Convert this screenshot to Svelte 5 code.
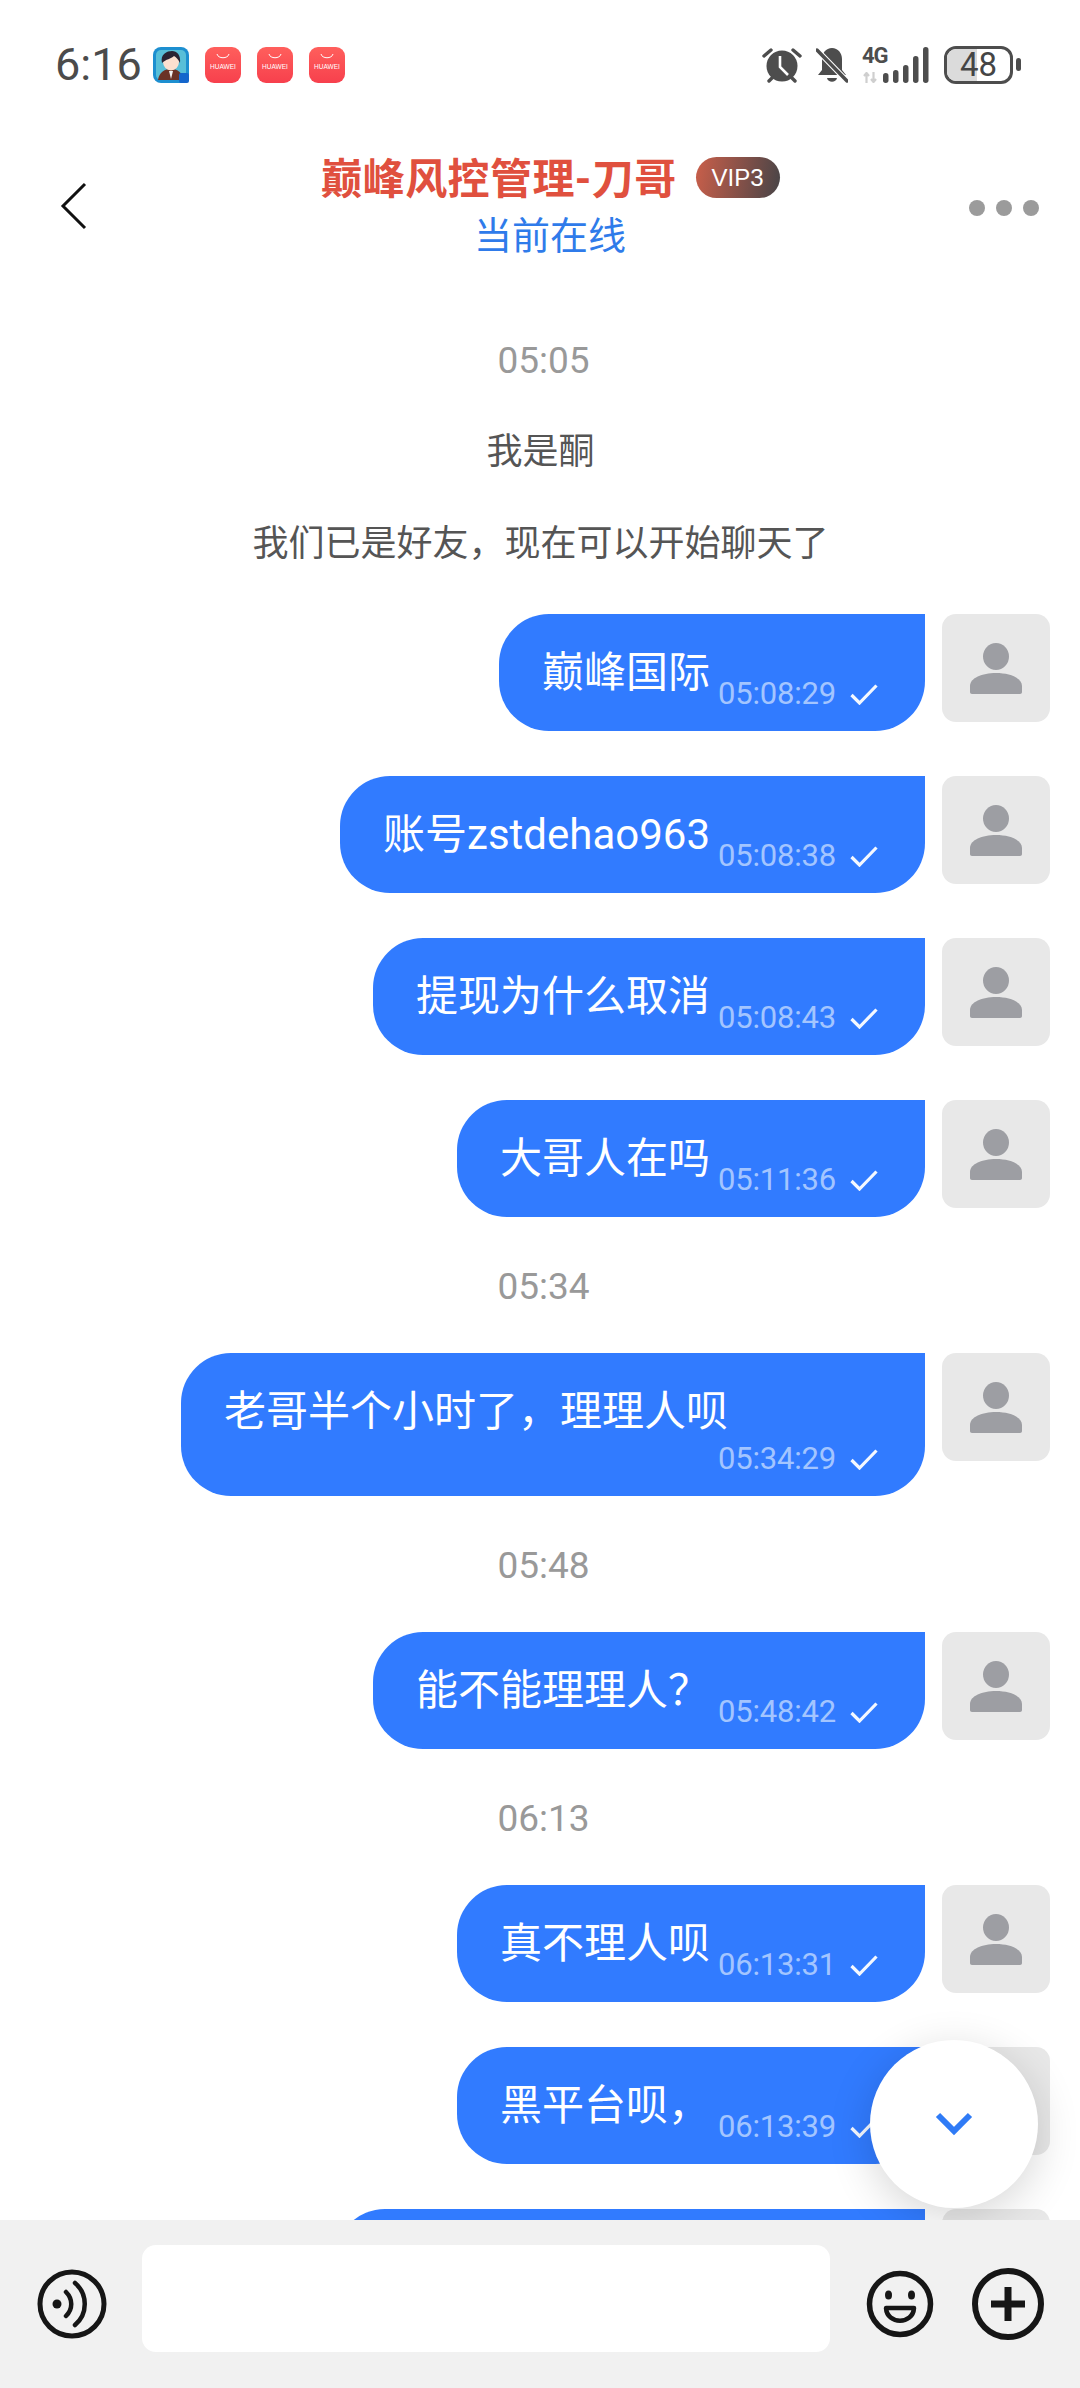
<script>
  const huaweiIcons = [0, 1, 2];
  const items = [
    { kind: 'time', text: '05:05' },
    { kind: 'sys', text: '我是酮' },
    { kind: 'sys', text: '我们已是好友，现在可以开始聊天了' },
    { kind: 'msg', text: '巅峰国际', at: '05:08:29' },
    { kind: 'msg', text: '账号zstdehao963', at: '05:08:38' },
    { kind: 'msg', text: '提现为什么取消', at: '05:08:43' },
    { kind: 'msg', text: '大哥人在吗', at: '05:11:36' },
    { kind: 'time', text: '05:34' },
    { kind: 'msg', text: '老哥半个小时了，理理人呗', at: '05:34:29' },
    { kind: 'time', text: '05:48' },
    { kind: 'msg', text: '能不能理理人？', at: '05:48:42' },
    { kind: 'time', text: '06:13' },
    { kind: 'msg', text: '真不理人呗', at: '06:13:31' },
    { kind: 'msg', text: '黑平台呗，', at: '06:13:39' },
    { kind: 'blank' }
  ];
</script>

{#snippet avatar()}
  <div class="avatar">
    <svg viewBox="0 0 52 51">
      <ellipse cx="26" cy="13.500" rx="13" ry="13.500" fill="#9d9ea3" />
      <path d="M0 49v-6C0 35 12 30 26 30s26 5 26 13v6c0 1.200-.8 2-2 2H2c-1.200 0-2-.8-2-2z" fill="#9d9ea3" />
    </svg>
  </div>
{/snippet}

<div class="page">
  <header class="status">
    <div class="status-left">
      <span class="clock">6:16</span>
      <svg class="app-icon" viewBox="0 0 36 36">
        <rect width="36" height="36" rx="8" fill="#1d8fd0" />
        <rect x="3" y="3" width="30" height="30" rx="5" fill="#58bfd8" />
        <path d="M5 33c1-8 7-11 13-11s11 3 13 11z" fill="#6a3226" />
        <ellipse cx="18" cy="15" rx="8" ry="8.500" fill="#fbe0cf" />
        <path d="M9 16c-2-9 5-12 10-12s9 4 8 12c-2-4-4-6-6-7-3 3-8 3-12 7z" fill="#2a2433" />
        <path d="M16 24h4l-2 8z" fill="#f2f2f2" />
        <rect x="26" y="26" width="10" height="10" rx="2" fill="#1466cc" />
      </svg>
      <div class="huawei-list">
        {#each huaweiIcons as id (id)}
          <div class="huawei">
            <svg class="huawei-arc" viewBox="0 0 14 6"><path d="M1 1c1 5 11 5 12 0" fill="none" stroke="#fff" stroke-width="1" /></svg>
            <span>HUAWEI</span>
          </div>
        {/each}
      </div>
    </div>
    <div class="status-right">
      <svg class="alarm" viewBox="0 0 40 36">
        <circle cx="20" cy="19" r="15.500" fill="#4d4d4d" />
        <path d="M18 9v11l8 8" fill="none" stroke="#fff" stroke-width="2.600" />
        <path d="M2 9l7-6M38 9l-7-6M7 34l3-3M33 34l-3-3" stroke="#4d4d4d" stroke-width="3.400" stroke-linecap="round" />
      </svg>
      <svg class="bell" viewBox="0 0 32 36">
        <path d="M16 1c-6 0-10 5-10 11v11l-4 5h28l-4-5V12C26 6 22 1 16 1z" fill="#4d4d4d" />
        <path d="M11 31h10c-1 5-9 5-10 0z" fill="#4d4d4d" />
        <path d="M1 3l30 31" stroke="#fff" stroke-width="5.500" />
        <path d="M1 3l30 31" stroke="#4d4d4d" stroke-width="3.400" stroke-linecap="round" />
      </svg>
      <div class="network">
        <div class="net-type">
          <span class="net-label">4G</span>
          <svg class="net-arrows" viewBox="0 0 14 11">
            <path d="M3.500 11V1M1 4l2.500-3L6 4M10.500 0v10M8 7l2.500 3L13 7" fill="none" stroke="#cfcfcf" stroke-width="2.200" />
          </svg>
        </div>
        <svg class="signal" viewBox="0 0 46 36">
          <rect x="0" y="26" width="5.500" height="10" rx="2.700" fill="#4d4d4d" />
          <rect x="10" y="23" width="5.500" height="13" rx="2.700" fill="#4d4d4d" />
          <rect x="20" y="18" width="5.500" height="18" rx="2.700" fill="#4d4d4d" />
          <rect x="30" y="9" width="5.500" height="27" rx="2.700" fill="#4d4d4d" />
          <rect x="40" y="0" width="5.500" height="36" rx="2.700" fill="#4d4d4d" />
        </svg>
      </div>
      <div class="battery">
        <div class="battery-body">
          <div class="battery-fill"></div>
          <span>48</span>
        </div>
        <div class="battery-nub"></div>
      </div>
    </div>
  </header>

  <nav class="nav">
    <svg class="back" viewBox="0 0 28 48"><path d="M25 2L3 24l22 22" fill="none" stroke="#111" stroke-width="3" /></svg>
    <div class="title-block">
      <div class="title-row">
        <span class="title">巅峰风控管理-刀哥</span>
        <span class="vip">VIP3</span>
      </div>
      <div class="online">当前在线</div>
    </div>
    <div class="dots"><i></i><i></i><i></i></div>
  </nav>

  <main class="chat">
    {#each items as item, i (i)}
      {#if item.kind === 'time'}
        <div class="label time">{item.text}</div>
      {:else if item.kind === 'sys'}
        <div class="label sys">{item.text}</div>
      {:else if item.kind === 'blank'}
        <div class="row">
          <div class="bubble blank"></div>
          {@render avatar()}
        </div>
      {:else}
        <div class="row">
          <div class="bubble">
            <span class="text">{item.text}</span>
            <span class="meta">
              <span class="stamp">{item.at}</span>
              <svg class="tick" viewBox="0 0 28 21"><path d="M1.500 11l8 8L26.500 1.500" fill="none" stroke="#fff" stroke-width="3.200" opacity="0.95" /></svg>
            </span>
          </div>
          {@render avatar()}
        </div>
      {/if}
    {/each}
    <button class="scroll-down" aria-label="scroll down">
      <svg viewBox="0 0 38 24"><path d="M3 3l16 16L35 3" fill="none" stroke="#2f7bf6" stroke-width="6" /></svg>
    </button>
  </main>

  <footer class="composer">
    <svg class="voice" viewBox="0 0 70 70">
      <circle cx="35" cy="35" r="32" fill="none" stroke="#161616" stroke-width="5" />
      <circle cx="20" cy="35" r="4.500" fill="#161616" />
      <path d="M29 23c7 7 7 17 0 24M38 14c13 11 13 31 0 42" fill="none" stroke="#161616" stroke-width="4.500" stroke-linecap="round" />
    </svg>
    <div class="input"></div>
    <svg class="smile" viewBox="0 0 68 68">
      <circle cx="34" cy="34" r="30.500" fill="none" stroke="#161616" stroke-width="5.500" />
      <ellipse cx="22.500" cy="25" rx="3.500" ry="4.500" fill="#161616" />
      <ellipse cx="45.500" cy="25" rx="3.500" ry="4.500" fill="#161616" />
      <path d="M20 38h28c-1 17-27 17-28 0z" fill="none" stroke="#161616" stroke-width="4.500" stroke-linejoin="round" />
    </svg>
    <svg class="plus" viewBox="0 0 72 72">
      <circle cx="36" cy="36" r="33" fill="none" stroke="#161616" stroke-width="6" />
      <path d="M36 19v34M19 36h34" stroke="#161616" stroke-width="7" />
    </svg>
  </footer>
</div>

<style>
  :global(body) {
    margin: 0;
    background: #fff;
  }
  .page {
    width: 1080px;
    height: 2388px;
    display: flex;
    flex-direction: column;
    overflow: hidden;
    font-family: Roboto, "Noto Sans CJK SC", sans-serif;
    background: #fff;
  }
  .status {
    flex: none;
    height: 124px;
    box-sizing: border-box;
    padding: 5px 59px 0 55px;
    display: flex;
    align-items: center;
    justify-content: space-between;
  }
  .status-left {
    display: flex;
    align-items: center;
  }
  .clock {
    font-size: 45px;
    color: #4b4b4b;
    line-height: 50px;
    width: 98px;
  }
  .app-icon {
    width: 36px;
    height: 36px;
  }
  .huawei-list {
    display: flex;
    gap: 16px;
    margin-left: 16px;
  }
  .huawei {
    width: 36px;
    height: 36px;
    border-radius: 9px;
    background: linear-gradient(#ff5f5c, #f7404d);
    display: flex;
    flex-direction: column;
    align-items: center;
    color: #fff;
  }
  .huawei-arc {
    width: 14px;
    height: 6px;
    margin-top: 6px;
  }
  .huawei span {
    font-size: 6.500px;
    line-height: 8px;
    margin-top: 4px;
    font-family: "Liberation Sans", sans-serif;
  }
  .status-right {
    display: flex;
    align-items: center;
  }
  .alarm {
    width: 40px;
    height: 36px;
  }
  .bell {
    width: 32px;
    height: 36px;
    margin-left: 14px;
  }
  .network {
    display: flex;
    align-items: flex-end;
    margin-left: 14px;
  }
  .net-type {
    width: 21px;
    display: flex;
    flex-direction: column;
    height: 36px;
    justify-content: space-between;
  }
  .net-label {
    font-weight: 700;
    font-size: 22px;
    line-height: 17px;
    letter-spacing: -1px;
    color: #4d4d4d;
    white-space: nowrap;
  }
  .net-arrows {
    width: 14px;
    height: 11px;
    margin-left: 1px;
  }
  .signal {
    width: 46px;
    height: 36px;
  }
  .battery {
    display: flex;
    align-items: center;
    margin-left: 15px;
  }
  .battery-body {
    position: relative;
    width: 69px;
    height: 38px;
    box-sizing: border-box;
    border: 3.500px solid #4d4d4d;
    border-radius: 12px;
    overflow: hidden;
    display: flex;
    align-items: center;
    justify-content: center;
  }
  .battery-fill {
    position: absolute;
    left: 0;
    top: 0;
    bottom: 0;
    width: 48%;
    background: #dbdbdb;
  }
  .battery-body span {
    position: relative;
    font-size: 33px;
    line-height: 33px;
    color: #454545;
  }
  .battery-nub {
    width: 5px;
    height: 13px;
    border-radius: 3px;
    background: #4d4d4d;
    margin-left: 3px;
  }
  .nav {
    flex: none;
    height: 152px;
    display: grid;
    grid-template-columns: 1fr auto 1fr;
    align-items: center;
    padding: 0 41px 0 61px;
  }
  .back {
    width: 28px;
    height: 48px;
    margin: 12px 0 0 -1px;
  }
  .title-block {
    display: flex;
    flex-direction: column;
    align-items: center;
    margin-top: 15px;
  }
  .title-row {
    display: flex;
    align-items: center;
    gap: 19px;
  }
  .title {
    font-size: 42px;
    font-weight: 700;
    color: #e0503e;
    line-height: 56px;
    letter-spacing: 0.4px;
  }
  .vip {
    width: 84px;
    height: 41px;
    border-radius: 21px;
    background: linear-gradient(100deg, #ca5f4a, #474447);
    color: #fff;
    font-family: "Liberation Sans", sans-serif;
    font-size: 24px;
    line-height: 41px;
    text-align: center;
    margin-top: -4px;
  }
  .online {
    font-size: 38px;
    color: #2f7bea;
    line-height: 56px;
  }
  .dots {
    justify-self: end;
    display: flex;
    gap: 11px;
    margin-top: 15px;
  }
  .dots i {
    width: 16px;
    height: 16px;
    border-radius: 50%;
    background: #9b9b9b;
  }
  .chat {
    position: relative;
    flex: 1;
    min-height: 0;
    overflow: hidden;
    display: flex;
    flex-direction: column;
    gap: 45px;
    padding-top: 60px;
  }
  .label {
    flex: none;
    height: 50px;
    line-height: 50px;
    text-align: center;
    font-size: 36px;
  }
  .time {
    color: #999;
    font-size: 37px;
    margin-bottom: -4px;
    padding-left: 7px;
  }
  .sys {
    color: #555;
    margin-left: 1px;
  }
  .sys + .sys {
    margin-top: -3px;
  }
  .row {
    flex: none;
    display: flex;
    justify-content: flex-end;
    align-items: flex-start;
    gap: 17px;
    padding-right: 30px;
  }
  .bubble {
    max-width: 744px;
    box-sizing: border-box;
    display: flex;
    flex-wrap: wrap;
    align-items: flex-end;
    column-gap: 8px;
    padding: 32px 47px 17px 43px;
    background: #317bff;
    border-radius: 50px 0 50px 50px;
  }
  .blank {
    width: 590px;
    height: 117px;
  }
  .text {
    font-size: 42px;
    line-height: 54px;
    color: #fff;
    padding-bottom: 14px;
    white-space: nowrap;
  }
  .meta {
    margin-left: auto;
    margin-top: -14px;
    height: 40px;
    display: flex;
    align-items: center;
    gap: 14px;
  }
  .stamp {
    font-size: 31px;
    letter-spacing: -0.2px;
    line-height: 40px;
    color: #a3c5ff;
  }
  .tick {
    width: 28px;
    height: 21px;
  }
  .avatar {
    flex: none;
    width: 108px;
    height: 108px;
    border-radius: 14px;
    background: #e8e8e8;
    display: flex;
    align-items: center;
    justify-content: center;
  }
  .avatar svg {
    width: 52px;
    height: 51px;
  }
  .scroll-down {
    position: absolute;
    left: 870px;
    top: 1764px;
    width: 168px;
    height: 168px;
    border: none;
    padding: 0;
    border-radius: 50%;
    background: #fff;
    box-shadow: 0 10px 44px rgba(0, 0, 0, 0.16);
    display: flex;
    align-items: center;
    justify-content: center;
  }
  .scroll-down svg {
    width: 38px;
    height: 24px;
  }
  .composer {
    flex: none;
    height: 168px;
    box-sizing: border-box;
    background: #f1f1f1;
    display: flex;
    align-items: flex-start;
    padding: 25px 0 0 37px;
  }
  .voice {
    width: 70px;
    height: 70px;
    margin-top: 24px;
  }
  .input {
    width: 688px;
    height: 107px;
    border-radius: 14px;
    background: #fff;
    margin-left: 35px;
  }
  .smile {
    width: 68px;
    height: 68px;
    margin: 25px 0 0 36px;
  }
  .plus {
    width: 72px;
    height: 72px;
    margin: 23px 0 0 38px;
  }
</style>
